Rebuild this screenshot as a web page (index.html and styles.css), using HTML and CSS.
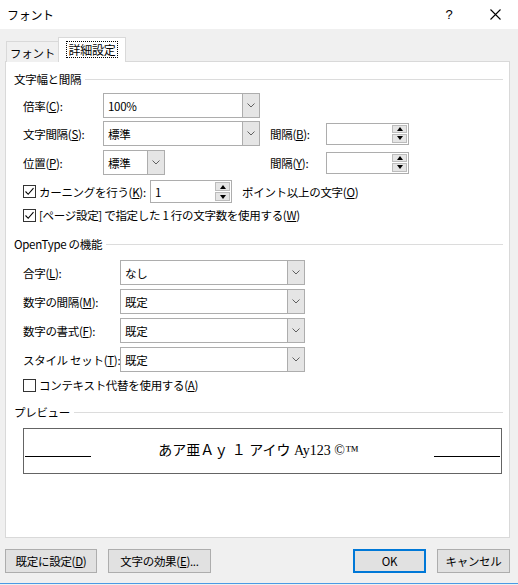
FILE: index.html
```html
<!DOCTYPE html>
<html lang="ja">
<head>
<meta charset="utf-8">
<title>フォント</title>
<link rel="stylesheet" href="styles.css">
</head>
<body>
<div class="window">
  <div class="titlebar">
    <div class="title">フォント</div>
    <div class="tbtn help">?</div>
    <div class="tbtn close">
      <svg width="11" height="11" viewBox="0 0 11 11"><path d="M0.5 0.5 L10.5 10.5 M10.5 0.5 L0.5 10.5" stroke="#000" stroke-width="1.1" fill="none"/></svg>
    </div>
  </div>

  <div class="tabs">
    <div class="tab">フォント</div>
    <div class="tab active"><span class="focus">詳細設定</span></div>
  </div>

  <div class="panel">
    <div class="group-head g1"><span>文字幅と間隔</span><div class="rule"></div></div>

    <div class="row r1">
      <div class="lbl w80">倍率(<u>C</u>):</div>
      <div class="combo wide"><div class="val">100%</div><div class="cbtn"><svg width="8" height="5" viewBox="0 0 8 5"><path d="M0.5 0.5 L4 4 L7.5 0.5" stroke="#606060" fill="none"/></svg></div></div>
    </div>

    <div class="row r2">
      <div class="lbl w80">文字間隔(<u>S</u>):</div>
      <div class="cell167"><div class="combo wide"><div class="val">標準</div><div class="cbtn"><svg width="8" height="5" viewBox="0 0 8 5"><path d="M0.5 0.5 L4 4 L7.5 0.5" stroke="#606060" fill="none"/></svg></div></div></div>
      <div class="lbl w56">間隔(<u>B</u>):</div>
      <div class="spin s83"><div class="sval"></div><div class="sbtns"><div class="sb"><span class="up"></span></div><div class="sb"><span class="dn"></span></div></div></div>
    </div>

    <div class="row r3">
      <div class="lbl w80">位置(<u>P</u>):</div>
      <div class="cell167"><div class="combo narrow"><div class="val">標準</div><div class="cbtn"><svg width="8" height="5" viewBox="0 0 8 5"><path d="M0.5 0.5 L4 4 L7.5 0.5" stroke="#606060" fill="none"/></svg></div></div></div>
      <div class="lbl w56">間隔(<u>Y</u>):</div>
      <div class="spin s83"><div class="sval"></div><div class="sbtns"><div class="sb"><span class="up"></span></div><div class="sb"><span class="dn"></span></div></div></div>
    </div>

    <div class="row r4">
      <div class="chk on"><svg width="11" height="11" viewBox="0 0 11 11"><path d="M1.5 5.5 L4.2 8.3 L9.5 2.2" stroke="#000" stroke-width="1.1" fill="none"/></svg></div>
      <div class="lbl w111">カーニングを行う(<u>K</u>):</div>
      <div class="spin s82"><div class="sval">1</div><div class="sbtns"><div class="sb"><span class="up"></span></div><div class="sb"><span class="dn"></span></div></div></div>
      <div class="lbl after">ポイント以上の文字(<u>O</u>)</div>
    </div>

    <div class="row r5">
      <div class="chk on"><svg width="11" height="11" viewBox="0 0 11 11"><path d="M1.5 5.5 L4.2 8.3 L9.5 2.2" stroke="#000" stroke-width="1.1" fill="none"/></svg></div>
      <div class="lbl">[ページ設定] で指定した 1 行の文字数を使用する(<u>W</u>)</div>
    </div>

    <div class="group-head g2"><span>OpenType の機能</span><div class="rule"></div></div>

    <div class="ot">
      <div class="row orow">
        <div class="lbl w97">合字(<u>L</u>):</div>
        <div class="combo ot-combo"><div class="val">なし</div><div class="cbtn"><svg width="8" height="5" viewBox="0 0 8 5"><path d="M0.5 0.5 L4 4 L7.5 0.5" stroke="#606060" fill="none"/></svg></div></div>
      </div>
      <div class="row orow">
        <div class="lbl w97">数字の間隔(<u>M</u>):</div>
        <div class="combo ot-combo"><div class="val">既定</div><div class="cbtn"><svg width="8" height="5" viewBox="0 0 8 5"><path d="M0.5 0.5 L4 4 L7.5 0.5" stroke="#606060" fill="none"/></svg></div></div>
      </div>
      <div class="row orow">
        <div class="lbl w97">数字の書式(<u>F</u>):</div>
        <div class="combo ot-combo"><div class="val">既定</div><div class="cbtn"><svg width="8" height="5" viewBox="0 0 8 5"><path d="M0.5 0.5 L4 4 L7.5 0.5" stroke="#606060" fill="none"/></svg></div></div>
      </div>
      <div class="row orow">
        <div class="lbl w97">スタイル セット(<u>T</u>):</div>
        <div class="combo ot-combo"><div class="val">既定</div><div class="cbtn"><svg width="8" height="5" viewBox="0 0 8 5"><path d="M0.5 0.5 L4 4 L7.5 0.5" stroke="#606060" fill="none"/></svg></div></div>
      </div>
    </div>

    <div class="row r6">
      <div class="chk"></div>
      <div class="lbl">コンテキスト代替を使用する(<u>A</u>)</div>
    </div>

    <div class="group-head g3"><span>プレビュー</span><div class="rule"></div></div>

    <div class="preview">
      <div class="pline left"></div>
      <div class="ptext">あア亜Ａｙ １ アイウ Ay123 ©™</div>
      <div class="pline right"></div>
    </div>
  </div>

  <div class="buttons">
    <div class="btn b1">既定に設定(<u>D</u>)</div>
    <div class="btn b2">文字の効果(<u>E</u>)...</div>
    <div class="spacer"></div>
    <div class="btn ok">OK</div>
    <div class="btn cancel">キャンセル</div>
  </div>
  <div class="bottomline"></div>
</div>
</body>
</html>
```

FILE: styles.css
```css
* { box-sizing: border-box; }
html, body { margin: 0; padding: 0; }
body {
  width: 518px;
  height: 585px;
  background: #f0f0f0;
  font-family: "Noto Sans CJK JP", "Noto Sans", sans-serif;
  font-size: 11.5px;
  letter-spacing: -0.3px;
  color: #000;
  overflow: hidden;
}
.window { width: 518px; height: 585px; display: flex; flex-direction: column; }

.titlebar {
  height: 29px;
  background: #fff;
  display: flex;
  align-items: center;
  padding-left: 7px;
  flex: none;
}
.title { flex: 1; font-size: 12px; }
.tbtn { width: 46px; height: 29px; display: flex; align-items: center; justify-content: center; }
.help { font-size: 13px; font-family: "Liberation Sans", sans-serif; }

.tabs {
  position: relative;
  z-index: 1;
  display: flex;
  align-items: flex-end;
  height: 25px;
  margin-top: 8px;
  margin-left: 6px;
  margin-bottom: -1px;
  flex: none;
}
.tab {
  height: 21px;
  width: 52px;
  border: 1px solid #d9d9d9;
  border-bottom: none;
  border-right: none;
  background: #f0f0f0;
  display: flex;
  align-items: center;
  justify-content: center;
  padding-top: 1px;
}
.tab.active {
  height: 25px;
  width: 68px;
  background: #fff;
  border-right: 1px solid #d9d9d9;
  padding-bottom: 2px;
}
.focus {
  border: 1px dotted #000;
  padding: 0 2px;
  line-height: 15px;
  height: 17px;
  display: inline-block;
  font-size: 12px;
}

.panel {
  height: 477px;
  margin: 0 8px 0 5px;
  background: #fff;
  border: 1px solid #d9d9d9;
  padding: 0 6px 0 8px;
  flex: none;
}

.group-head {
  display: flex;
  align-items: center;
  height: 16px;
}
.group-head .rule { flex: 1; height: 1px; background: #dcdcdc; margin-left: 4px; }
.g1 { margin-top: 9px; }
.g2 { margin-top: 13px; }
.g3 { margin-top: 11px; }

.row { display: flex; align-items: center; padding-left: 9px; }
.r1 { margin-top: 6px; height: 25px; }
.r2 { margin-top: 3px; height: 25px; }
.r3 { margin-top: 4px; height: 25px; }
.r4 { margin-top: 5px; height: 23px; }
.r5 { margin-top: 4px; height: 16px; }
.r6 { margin-top: 5px; height: 16px; }

.ot { margin-top: 8px; display: flex; flex-direction: column; gap: 4px; }
.orow { height: 25px; }

.lbl { white-space: nowrap; line-height: 16px; }
.w80 { width: 80px; flex: none; }
.w56 { width: 56px; flex: none; }
.w97 { width: 97px; flex: none; }
.w111 { width: 111px; flex: none; }
.after { margin-left: 10px; }
.cell167 { width: 167px; flex: none; }

.combo {
  height: 25px;
  border: 1px solid #adadad;
  background: #fff;
  display: flex;
  align-items: stretch;
}
.combo.wide { width: 157px; }
.combo.narrow { width: 62px; }
.combo.ot-combo { width: 185px; }
.combo .val { flex: 1; padding-left: 4px; display: flex; align-items: center; white-space: nowrap; overflow: hidden; }
.cbtn {
  width: 17px;
  background: #e5e5e5;
  border-left: 1px solid #adadad;
  display: flex;
  align-items: center;
  justify-content: center;
}

.spin {
  height: 23px;
  border: 1px solid #adadad;
  background: #fff;
  display: flex;
  align-items: stretch;
  padding: 1px;
}
.s83 { width: 83px; height: 22px; }
.s82 { width: 82px; }
.sval { flex: 1; padding-left: 3px; display: flex; align-items: center; }
.sbtns { width: 15px; display: flex; flex-direction: column; gap: 1px; }
.sb {
  flex: 1;
  background: #e5e5e5;
  border: 1px solid #bcbcbc;
  display: flex;
  align-items: center;
  justify-content: center;
}
.up { width: 0; height: 0; border-left: 3.5px solid transparent; border-right: 3.5px solid transparent; border-bottom: 4px solid #000; }
.dn { width: 0; height: 0; border-left: 3.5px solid transparent; border-right: 3.5px solid transparent; border-top: 4px solid #000; }

.chk {
  width: 13px;
  height: 13px;
  border: 1px solid #333;
  background: #fff;
  margin-right: 3px;
  flex: none;
  display: flex;
  align-items: center;
  justify-content: center;
}
.chk svg { display: block; }

.preview {
  margin-top: 8px;
  margin-left: 9px;
  margin-right: 1px;
  height: 46px;
  border: 1px solid #646464;
  display: flex;
  align-items: flex-start;
}
.pline { width: 66px; height: 1px; background: #000; margin-top: 27px; flex: none; }
.pline.left { margin-left: 1px; }
.pline.right { margin-right: 1px; }
.ptext {
  flex: 1;
  text-align: center;
  margin-top: 13px;
  line-height: 17px;
  font-family: "Liberation Serif", "Noto Sans CJK JP", serif;
  font-size: 14px;
  letter-spacing: 0;
  padding-right: 8px;
}

.buttons {
  display: flex;
  margin-top: 11px;
  padding-left: 5px;
  padding-right: 8px;
  height: 24px;
  flex: none;
}
.btn {
  height: 24px;
  background: #e1e1e1;
  border: 1px solid #adadad;
  display: flex;
  align-items: center;
  justify-content: center;
  white-space: nowrap;
}
.b1 { width: 92px; }
.b2 { width: 103px; margin-left: 11px; }
.spacer { flex: 1; }
.ok { width: 73px; border: 2px solid #0078d7; }
.cancel { width: 73px; margin-left: 11px; }

.bottomline { margin-top: 10px; height: 1px; background: #4a9be4; flex: none; }
```
